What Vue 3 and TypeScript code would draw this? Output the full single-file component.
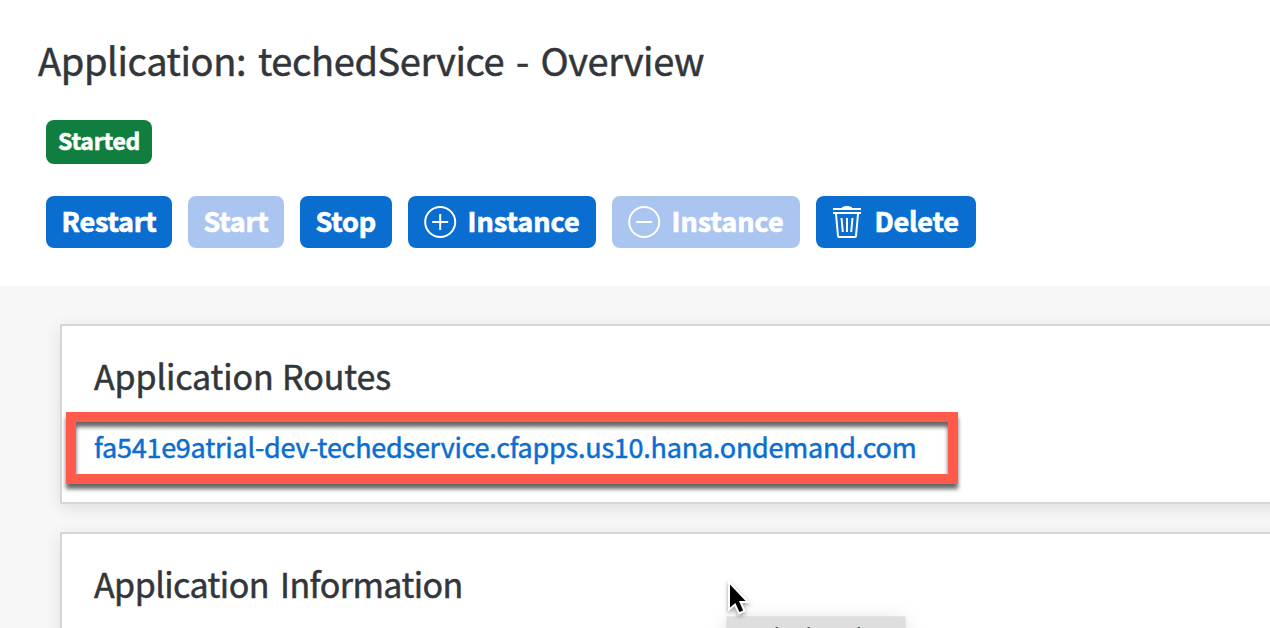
<script setup lang="ts">
interface Action {
  label: string
  icon?: 'add' | 'less' | 'delete'
  disabled?: boolean
  width: number
}

const actions: Action[] = [
  { label: 'Restart', width: 126 },
  { label: 'Start', disabled: true, width: 96 },
  { label: 'Stop', width: 92 },
  { label: 'Instance', icon: 'add', width: 188 },
  { label: 'Instance', icon: 'less', disabled: true, width: 188 },
  { label: 'Delete', icon: 'delete', width: 160 },
]
</script>

<template>
  <div class="page">
    <header class="header">
      <h1 class="title">Application: techedService - Overview</h1>
      <span class="badge">Started</span>
      <div class="actions">
        <button
          v-for="(a, i) in actions"
          :key="i"
          class="btn"
          :class="[a.icon, { off: a.disabled }]"
          :disabled="a.disabled"
          :style="{ width: a.width + 'px' }"
        >
          <svg v-if="a.icon" class="icon" width="32" height="32" viewBox="0 0 32 32" fill="none" stroke="#fff" stroke-width="2">
            <template v-if="a.icon === 'delete'">
              <path d="M9.500 2.500Q10 0.800 12 0.600Q12.500 0 14 0H16Q17.500 0 18 0.600Q20 0.800 20.500 2.500Z" fill="#fff" stroke="none" />
              <path d="M1 3H29M1 7H29" />
              <path d="M4 8L6 30Q6.100 31 7 31H23Q23.900 31 24 30L26 8" />
              <path d="M9.500 12L10.800 26M15 12V26M20.500 12L19.200 26" />
            </template>
            <template v-else>
              <circle cx="16.200" cy="16" r="15" />
              <path d="M8.200 16H24.200" />
              <path v-if="a.icon === 'add'" d="M16.200 8V24" />
            </template>
          </svg>
          <span>{{ a.label }}</span>
        </button>
      </div>
    </header>
    <main class="content">
      <section class="card">
        <h2 class="heading">Application Routes</h2>
        <a class="link">fa541e9atrial-dev-techedservice.cfapps.us10.hana.ondemand.com</a>
        <div class="highlight"></div>
      </section>
      <section class="card">
        <h2 class="heading tight">Application Information</h2>
      </section>
    </main>
    <div class="tooltip">techedService</div>
    <svg class="cursor" width="30" height="40" viewBox="0 0 30 40">
      <path d="M5 4V31.500L11 26.500L15 35.500L20.500 33L16.500 24H24Z" fill="#000" stroke="#fff" stroke-width="2" />
    </svg>
  </div>
</template>

<style>
body {
  overflow: hidden;
}
</style>

<style scoped>
.page {
  position: relative;
  width: 1270px;
  height: 628px;
  overflow: hidden;
  background: #f7f7f7;
  color: #32363a;
  font-family: "Noto Sans CJK SC", "Noto Sans", sans-serif;
}
.header {
  height: 286px;
  box-sizing: border-box;
  padding: 30px 38px 0;
  background: #fff;
}
.title {
  margin: 0;
  font-size: 38px;
  font-weight: 400;
  line-height: 60px;
  letter-spacing: -0.38px;
  word-spacing: 3.6px;
  white-space: nowrap;
  -webkit-text-stroke: 0.5px currentColor;
}
.badge {
  display: block;
  box-sizing: border-box;
  width: 106px;
  height: 44px;
  margin: 30px 0 32px 8px;
  padding-left: 12px;
  border-radius: 8px;
  background: #107e3e;
  color: #fff;
  font-size: 23px;
  font-weight: 700;
  line-height: 41px;
  letter-spacing: -0.25px;
  -webkit-text-stroke: 0.6px currentColor;
}
.actions {
  display: flex;
  gap: 16px;
  margin-left: 8px;
}
.btn {
  display: flex;
  align-items: center;
  box-sizing: border-box;
  height: 52px;
  padding: 0 0 0 16px;
  gap: 12px;
  border: 0;
  border-radius: 8px;
  background: #0a6ed1;
  color: #fff;
  font: 700 27px/50px "Noto Sans CJK SC", "Noto Sans", sans-serif;
  letter-spacing: -0.2px;
  white-space: nowrap;
}
.btn span {
  height: 52px;
  margin-left: -0.5px;
  -webkit-text-stroke: 0.7px currentColor;
}
.btn.add,
.btn.less {
  letter-spacing: 0;
}
.btn.delete span {
  margin-left: -1.5px;
}
.off {
  background: #a9c5f0;
}
.icon {
  flex: none;
  overflow: visible;
}
.content {
  display: flex;
  flex-direction: column;
  gap: 28px;
  padding: 38px 0 0 60px;
}
.card {
  position: relative;
  box-sizing: border-box;
  width: 1240px;
  height: 180px;
  padding: 22px 32px 0;
  border: 2px solid #d6d6d6;
  background: #fff;
  box-shadow: 0 4px 16px rgba(0, 0, 0, 0.1);
}
.heading {
  margin: 0;
  font-size: 34px;
  font-weight: 400;
  line-height: 56px;
  letter-spacing: -0.12px;
  word-spacing: 1px;
  white-space: nowrap;
  -webkit-text-stroke: 0.5px currentColor;
}
.tight {
  letter-spacing: -0.55px;
  word-spacing: 4px;
}
.link {
  display: block;
  margin-top: 21px;
  color: #0a6ed1;
  font-size: 27px;
  line-height: 44px;
  letter-spacing: -0.24px;
  white-space: nowrap;
  -webkit-text-stroke: 0.5px currentColor;
}
.highlight {
  position: absolute;
  left: 4px;
  top: 86px;
  box-sizing: border-box;
  width: 892px;
  height: 72px;
  border: 10px solid #ff5a4b;
  filter: drop-shadow(0 5px 2px rgba(0, 0, 0, 0.6));
}
.tooltip {
  position: absolute;
  left: 727px;
  top: 617px;
  box-sizing: border-box;
  width: 178px;
  height: 40px;
  padding-left: 18px;
  background: #dedede;
  box-shadow: 0 0 1px rgba(0, 0, 0, 0.4), 0 4px 20px rgba(0, 0, 0, 0.15);
  color: #444;
  font: 22px/38px "Liberation Sans", Arial, sans-serif;
}
.cursor {
  position: absolute;
  left: 724px;
  top: 578px;
  filter: drop-shadow(0 2px 2px rgba(0, 0, 0, 0.4));
}
</style>
